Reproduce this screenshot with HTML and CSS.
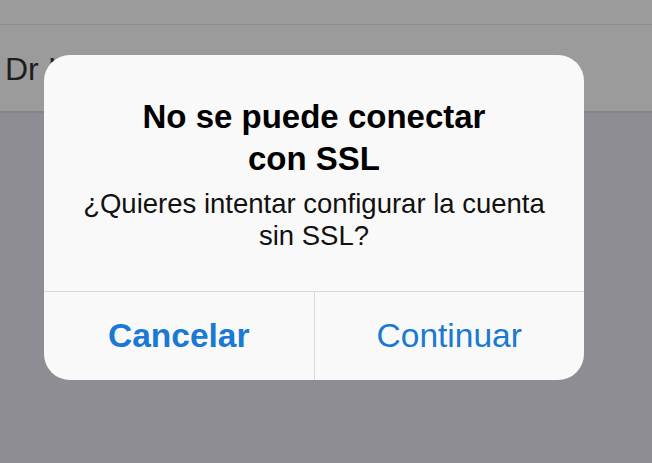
FILE: index.html
```html
<!DOCTYPE html>
<html lang="es">
<head>
<meta charset="utf-8">
<link rel="stylesheet" href="styles.css">
</head>
<body>
<div class="screen">
  <div class="topbar"></div>
  <div class="row"><span class="row-text">Dr Innes</span></div>
  <div class="rest"></div>
</div>
<div class="alert">
  <div class="alert-body">
    <div class="alert-title">No se puede conectar<br>con SSL</div>
    <div class="alert-msg">¿Quieres intentar configurar la cuenta<br>sin SSL?</div>
  </div>
  <div class="alert-actions">
    <div class="btn btn-bold">Cancelar</div>
    <div class="btn btn-right">Continuar</div>
  </div>
</div>
</body>
</html>
```

FILE: styles.css
```css
html, body {
  margin: 0;
  padding: 0;
  width: 652px;
  height: 463px;
  overflow: hidden;
  background: #8e8d93;
  font-family: "Liberation Sans", Arial, sans-serif;
}
.screen {
  display: flex;
  flex-direction: column;
  height: 463px;
}
.topbar {
  height: 24px;
  background: #9b9b9b;
  border-bottom: 1px solid #8b8b8b;
}
.row {
  height: 88px;
  background: #9b9b9b;
  border-bottom: 2px solid #858589;
  display: flex;
  align-items: center;
  padding-left: 5px;
  box-sizing: border-box;
}
.row-text {
  font-size: 32px;
  color: #1e1e1e;
  margin-top: 2px;
}
.rest {
  flex: 1;
  background: #8e8d93;
}
.alert {
  position: absolute;
  left: 44px;
  top: 55px;
  width: 540px;
  height: 325px;
  background: #f9f9f9;
  border-radius: 26px;
  display: flex;
  flex-direction: column;
  overflow: hidden;
}
.alert-body {
  padding: 41px 20px 0;
  height: 236px;
  box-sizing: border-box;
  text-align: center;
  color: #000;
}
.alert-title {
  font-weight: bold;
  font-size: 33px;
  line-height: 42px;
}
.alert-msg {
  margin-top: 8px;
  font-size: 27.5px;
  line-height: 32px;
  color: #111;
}
.alert-actions {
  flex: 1;
  display: flex;
  border-top: 1px solid #d9d9db;
}
.btn {
  flex: 1;
  display: flex;
  align-items: center;
  justify-content: center;
  font-size: 33.5px;
  color: #1a79d3;
}
.btn-bold {
  font-weight: bold;
}
.btn-right {
  border-left: 1px solid #d9d9db;
}
```
